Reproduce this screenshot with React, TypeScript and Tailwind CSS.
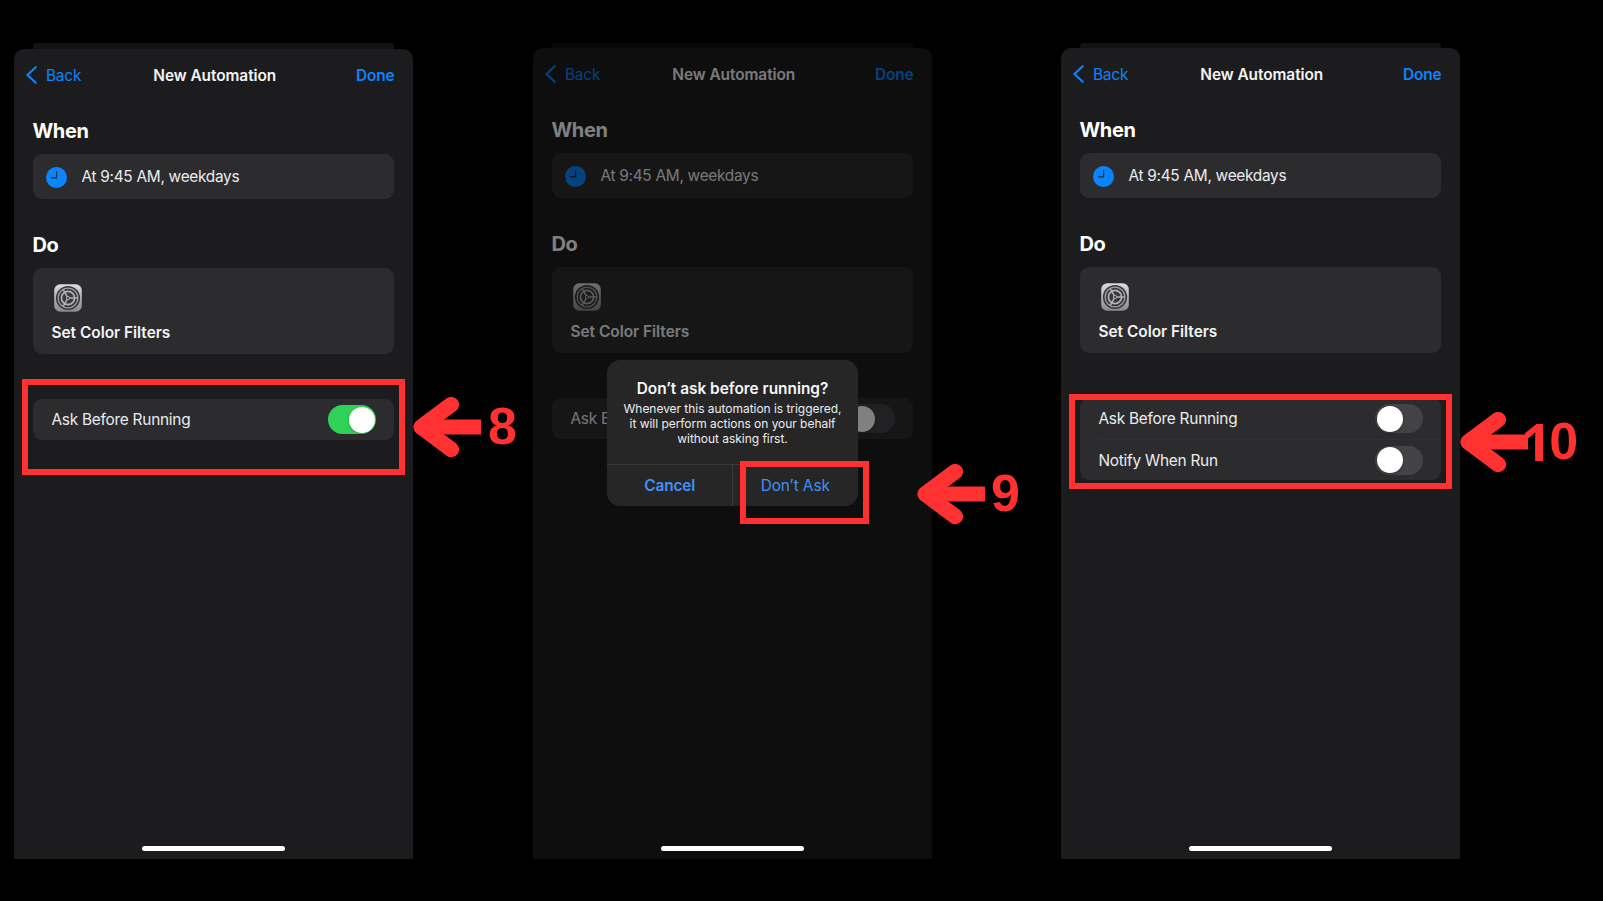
import type { ReactNode } from "react";

function Gear() {
  return (
    <svg className="block h-7 w-7" viewBox="0 0 28 28" fill="none">
      <defs>
        <linearGradient id="tile" x1="0" y1="0" x2="0" y2="1">
          <stop offset="0" stopColor="#dcdce0" />
          <stop offset="1" stopColor="#8a8a8d" />
        </linearGradient>
      </defs>
      <rect x="0.2" y="0.2" width="27.6" height="27.6" rx="6" fill="url(#tile)" />
      <circle cx="14" cy="14" r="12.1" fill="#3a3a3c" />
      <circle cx="14" cy="14" r="9.9" stroke="#a0a0a3" strokeWidth="1.3" />
      <circle cx="14" cy="14" r="6.6" stroke="#b2b2b5" strokeWidth="1.7" />
      <circle cx="14" cy="14" r="1.6" stroke="#b2b2b5" strokeWidth="1" />
      <path d="M15.6 14H23.6M13.2 12.6L9.2 5.7M13.2 15.4L9.2 22.3" stroke="#b2b2b5" strokeWidth="1.5" />
    </svg>
  );
}

function Toggle({ on = false }: { on?: boolean }) {
  return (
    <span
      className={
        on
          ? "flex h-[29px] w-12 items-center justify-end rounded-full bg-[#30d158] px-[1.5px]"
          : "flex h-[29px] w-12 items-center rounded-full bg-[#434347] px-[1.5px]"
      }
    >
      <span className="h-[26px] w-[26px] rounded-full bg-white shadow-[0_1px_3px_rgba(0,0,0,0.25)]" />
    </span>
  );
}

function Row({ label, on, height }: { label: string; on?: boolean; height: string }) {
  return (
    <div className={`flex items-center justify-between pr-[18px] pl-[18.5px] ${height}`}>
      <span className="pt-px text-[15.4px] tracking-[-0.25px] text-[#ebebed]">{label}</span>
      <Toggle on={on} />
    </div>
  );
}

function Phone({ dim = false, lower = false, children, overlay }: { dim?: boolean; lower?: boolean; children: ReactNode; overlay?: ReactNode }) {
  return (
    <section className="relative flex w-[399px] shrink-0 flex-col pt-[43px]">
      <div className={dim ? "flex flex-col opacity-50" : "flex flex-col"}>
        <div className={`mx-[19px] rounded-t-[3px] bg-[#131314] ${lower ? "h-[6px]" : "h-[5px]"}`} />
        <div className={`flex flex-col rounded-t-[10px] bg-[#1c1c1e] px-[19px] ${lower ? "h-[810px]" : "h-[811px]"}`}>
          <header className="grid h-[53px] grid-cols-3 items-center text-[15.4px] text-[#0a84ff]">
            <span className="-ml-[7px] flex items-center gap-[9px] tracking-[-0.2px]">
              <svg className="h-[18px] w-[11px]" viewBox="0 0 11 18" fill="none" stroke="#0a84ff" strokeWidth="2.1" strokeLinecap="round" strokeLinejoin="round">
                <path d="M9.7 1.2L1.4 9L9.7 16.8" />
              </svg>
              Back
            </span>
            <span className="text-center font-[580] tracking-[-0.05px] whitespace-nowrap text-[#f4f4f5]">New Automation</span>
            <span className="-mr-[0.5px] text-right font-[580] tracking-[-0.1px]">Done</span>
          </header>
          <h2 className="mt-[15px] -ml-[0.5px] h-[28px] text-[20px] leading-[28px] font-[650] tracking-[-0.4px] text-white">When</h2>
          <div className="mt-[9px] flex h-[45px] items-center gap-[14px] rounded-[9px] bg-[#2c2c2e] pt-px pl-[13.4px]">
            <svg className="h-[21px] w-[21px]" viewBox="0 0 21 21" fill="none">
              <circle cx="10.5" cy="10.5" r="10.5" fill="#0a84ff" />
              <path d="M10.6 4V10.9H5" stroke="#2c2f38" strokeWidth="1.2" />
            </svg>
            <span className="text-[15.4px] tracking-[-0.28px] text-[#ebebed]">At 9:45 AM, weekdays</span>
          </div>
          <h2 className="mt-[32px] -ml-[0.5px] h-[28px] text-[20px] leading-[28px] font-[650] tracking-[-0.4px] text-white">Do</h2>
          <div className="mt-[9px] flex h-[86px] flex-col rounded-[9px] bg-[#2c2c2e] pt-[16px] pl-[18.5px]">
            <div className="ml-[2.5px]">
              <Gear />
            </div>
            <span className="mt-[9px] text-[15.4px] leading-6 font-[560] text-[#f4f4f5]">Set Color Filters</span>
          </div>
          <div className="mt-[45px] rounded-[9px] bg-[#2c2c2e]">{children}</div>
        </div>
      </div>
      {overlay}
      <div className="absolute top-[846.3px] left-[128.3px] h-[5.2px] w-[142.6px] rounded-full bg-white" />
    </section>
  );
}

function Dialog() {
  return (
    <div className="absolute top-[360px] left-[74px] flex h-[146px] w-[251px] flex-col overflow-hidden rounded-[13px] bg-[#262627] text-center">
      <div className="flex h-[104px] flex-col items-center pt-[19px]">
        <p className="h-[22px] text-[15.4px] leading-[20px] font-[570] whitespace-nowrap text-[#f7f7f7]">Don’t ask before running?</p>
        <p className="text-[12px] leading-[15px] tracking-[-0.04px] whitespace-nowrap text-[#ededee]">
          Whenever this automation is triggered,
          <br />
          it will perform actions on your behalf
          <br />
          without asking first.
        </p>
      </div>
      <div className="grid h-[42px] grid-cols-2 border-t border-[#3a3a3c] text-[15.4px] leading-[42px] text-[#4490f5]">
        <span className="border-r border-[#3a3a3c] pl-px font-semibold tracking-[-0.1px]">Cancel</span>
        <span className="tracking-[-0.1px]">Don’t Ask</span>
      </div>
    </div>
  );
}

function Callout({ children, place, gap }: { children: ReactNode; place: string; gap: string }) {
  return (
    <div className={`absolute flex h-[62px] items-center text-[#ff3131] ${place}`}>
      <svg className="h-[62px] w-[68px] shrink-0" viewBox="0 0 68 62" fill="none" stroke="#ff3131">
        <path d="M38.3 8.6L8.2 31L38.3 53.4" strokeWidth="15.6" strokeLinecap="round" strokeLinejoin="round" />
        <path d="M8 31H68" strokeWidth="14.8" />
      </svg>
      <span className={`flex h-[62px] font-['Liberation_Sans',Arial,sans-serif] text-[52px] leading-[60px] font-bold ${gap}`}>{children}</span>
    </div>
  );
}

export default function App() {
  return (
    <main className="relative flex h-[901px] w-[1603px] overflow-hidden bg-black pl-[14px] font-[Inter,sans-serif]">
      <Phone lower>
        <Row label="Ask Before Running" on height="h-[41px]" />
      </Phone>
      <div className="w-[120px] shrink-0" />
      <Phone dim overlay={<Dialog />}>
        <Row label="Ask Before Running" height="h-[41px]" />
      </Phone>
      <div className="w-[129px] shrink-0" />
      <Phone>
        <Row label="Ask Before Running" height="h-[41px]" />
        <div className="ml-[19px] h-px bg-[#323235]" />
        <Row label="Notify When Run" height="h-[40px]" />
      </Phone>

      <div className="absolute top-[379px] left-[22px] h-[96px] w-[383px] border-[6px] border-[#ff3131]" />
      <div className="absolute top-[461px] left-[740px] h-[63px] w-[129px] border-[6px] border-[#ff3131]" />
      <div className="absolute top-[394px] left-[1069px] h-[95px] w-[383px] border-[6px] border-[#ff3131]" />
      <Callout place="top-[396px] left-[413px]" gap="ml-[7px]">8</Callout>
      <Callout place="top-[463px] left-[917px]" gap="ml-[6px]">9</Callout>
      <Callout place="top-[411px] left-[1460px]" gap="-ml-[6.5px]">
        <span className="font-['Open_Sans',sans-serif]">1</span>
        <span className="-ml-[2px]">0</span>
      </Callout>
    </main>
  );
}
